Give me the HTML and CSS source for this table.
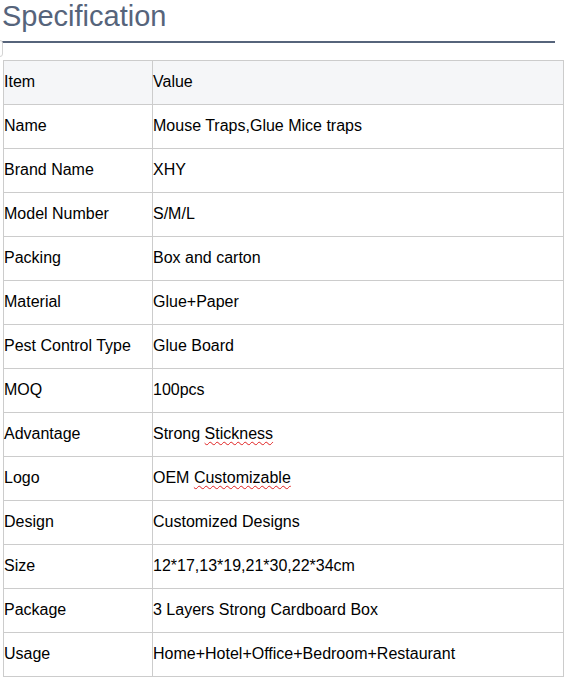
FILE: index.html
```html
<!DOCTYPE html>
<html>
<head>
<meta charset="utf-8">
<link rel="stylesheet" href="styles.css">
</head>
<body>
<h2 class="title">Specification</h2>
<div class="stub"></div>
<table class="spec">
  <tr class="head"><td class="k">Item</td><td>Value</td></tr>
  <tr><td class="k">Name</td><td>Mouse Traps,Glue Mice traps</td></tr>
  <tr><td class="k">Brand Name</td><td>XHY</td></tr>
  <tr><td class="k">Model Number</td><td>S/M/L</td></tr>
  <tr><td class="k">Packing</td><td>Box and carton</td></tr>
  <tr><td class="k">Material</td><td>Glue+Paper</td></tr>
  <tr><td class="k">Pest Control Type</td><td>Glue Board</td></tr>
  <tr><td class="k">MOQ</td><td>100pcs</td></tr>
  <tr><td class="k">Advantage</td><td>Strong <span class="sp">Stickness</span></td></tr>
  <tr><td class="k">Logo</td><td>OEM <span class="sp">Customizable</span></td></tr>
  <tr><td class="k">Design</td><td>Customized Designs</td></tr>
  <tr><td class="k">Size</td><td>12*17,13*19,21*30,22*34cm</td></tr>
  <tr><td class="k">Package</td><td>3 Layers Strong Cardboard Box</td></tr>
  <tr><td class="k">Usage</td><td>Home+Hotel+Office+Bedroom+Restaurant</td></tr>
</table>
</body>
</html>
```
FILE: styles.css
```css
html, body {
  margin: 0;
  padding: 0;
  background: #fff;
  font-family: "Liberation Sans", Arial, sans-serif;
}
.title {
  margin: 0 0 0 2px;
  width: 553px;
  height: 41px;
  font-size: 29px;
  font-weight: normal;
  line-height: 32px;
  color: #56647b;
  border-bottom: 2px solid #56647b;
}
.stub {
  margin: -3px 0 0 -10px;
  width: 11px;
  height: 15px;
  border: 1px solid #d4d4d4;
  border-radius: 3px;
}
.spec {
  margin: 3px 0 0 3px;
  width: 561px;
  border-collapse: collapse;
  font-size: 16px;
  color: #000;
}
.spec tr {
  height: 44px;
}
.spec td {
  border: 1px solid #cccccc;
  padding: 0 1px 2px 0;
  vertical-align: middle;
  white-space: nowrap;
}
.spec td.k {
  width: 147px;
}
.spec .head td {
  background: #f5f6f8;
}
.sp {
  text-decoration: underline wavy #e02020;
  text-decoration-thickness: 1px;
  text-underline-offset: 2px;
}
```
